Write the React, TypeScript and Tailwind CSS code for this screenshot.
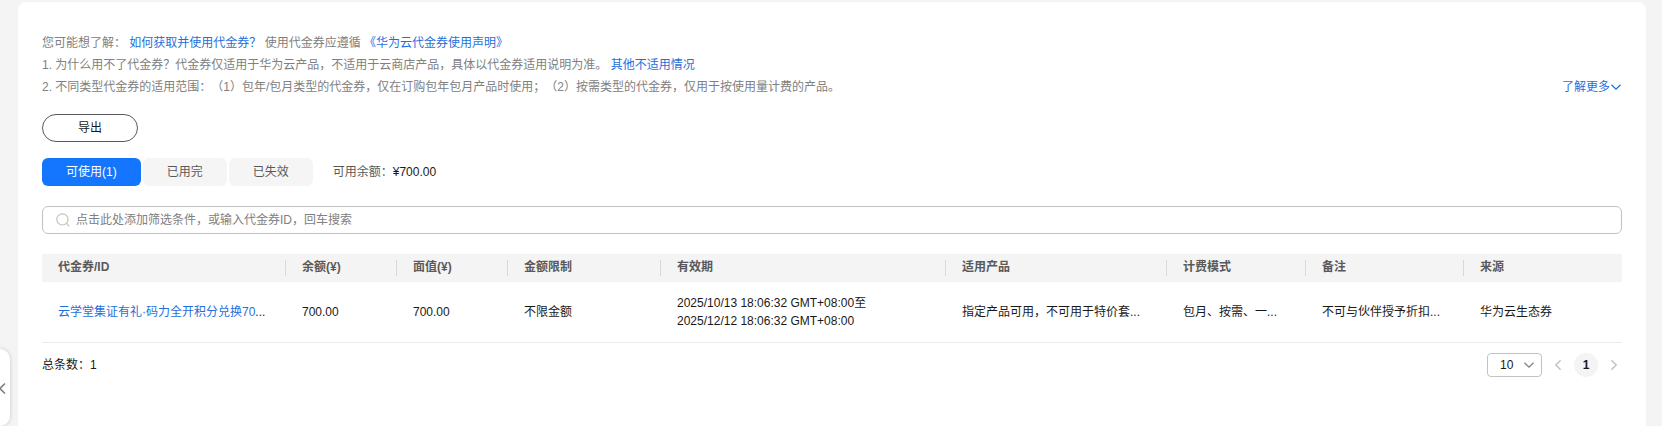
import { useState } from "react";

type Tab = { key: string; label: string };

const tabs: Tab[] = [
  { key: "usable", label: "可使用(1)" },
  { key: "used", label: "已用完" },
  { key: "expired", label: "已失效" },
];

const columns = [
  { title: "代金券/ID", width: "w-[244px]" },
  { title: "余额(¥)", width: "w-[111px]" },
  { title: "面值(¥)", width: "w-[111px]" },
  { title: "金额限制", width: "w-[153px]" },
  { title: "有效期", width: "w-[285px]" },
  { title: "适用产品", width: "w-[221px]" },
  { title: "计费模式", width: "w-[139px]" },
  { title: "备注", width: "w-[158px]" },
  { title: "来源", width: "w-[158px]" },
];

type IconProps = { className?: string };

function ChevronDown({ className }: IconProps) {
  return (
    <svg viewBox="0 0 12 12" fill="none" stroke="currentColor" className={className} aria-hidden="true">
      <path d="M1.5 3.8 6 8.2l4.5-4.4" strokeWidth="1.3" />
    </svg>
  );
}

function ChevronLeft({ className }: IconProps) {
  return (
    <svg viewBox="0 0 12 12" fill="none" stroke="currentColor" className={className} aria-hidden="true">
      <path d="M8.6 1.3 3.8 6l4.8 4.7" strokeWidth="1.5" />
    </svg>
  );
}

function ChevronRight({ className }: IconProps) {
  return (
    <svg viewBox="0 0 12 12" fill="none" stroke="currentColor" className={className} aria-hidden="true">
      <path d="M3.4 1.3 8.2 6l-4.8 4.7" strokeWidth="1.5" />
    </svg>
  );
}

function SearchIcon({ className }: IconProps) {
  return (
    <svg viewBox="0 0 14 14" fill="none" stroke="currentColor" strokeWidth="1.2" className={className} aria-hidden="true">
      <circle cx="6.4" cy="6.4" r="5.6" />
      <path d="m10.4 10.4 3 3" />
    </svg>
  );
}

function Notice() {
  return (
    <section className="flex items-end justify-between leading-[22px] text-[#808080]">
      <div>
        <p>
          您可能想了解： <a href="#get" className="text-[#1f6fdc]">如何获取并使用代金券？</a> 使用代金券应遵循{" "}
          <a href="#terms" className="text-[#1f6fdc]">《华为云代金券使用声明》</a>
        </p>
        <p>
          1. 为什么用不了代金券？代金券仅适用于华为云产品，不适用于云商店产品，具体以代金券适用说明为准。{" "}
          <a href="#others" className="text-[#1f6fdc]">其他不适用情况</a>
        </p>
        <p>2. 不同类型代金券的适用范围：（1）包年/包月类型的代金券，仅在订购包年包月产品时使用；（2）按需类型的代金券，仅用于按使用量计费的产品。</p>
      </div>
      <a href="#more" className="flex shrink-0 items-center text-[#1f6fdc]">
        了解更多
        <ChevronDown className="size-3" />
      </a>
    </section>
  );
}

function VoucherTable() {
  return (
    <table className="mt-5 w-full table-fixed border-separate border-spacing-0 text-left">
      <colgroup>
        {columns.map((c) => (
          <col key={c.title} className={c.width} />
        ))}
      </colgroup>
      <thead>
        <tr className="h-7 bg-[#f4f4f4] text-[#595959]">
          {columns.map((c, i) => (
            <th key={c.title} scope="col" className="p-0 font-bold">
              <div className={i < columns.length - 1 ? "h-4 border-r border-[#d9d9d9] pl-4 leading-[14px]" : "h-4 pl-4 leading-[14px]"}>
                {c.title}
              </div>
            </th>
          ))}
        </tr>
      </thead>
      <tbody>
        <tr className="h-[61px] leading-[18px] whitespace-nowrap *:border-b *:border-[#ebebeb] *:px-4 *:py-0">
          <td>
            <a href="#voucher" className="text-[#1f6fdc]">云学堂集证有礼·码力全开积分兑换70</a>...
          </td>
          <td>700.00</td>
          <td>700.00</td>
          <td>不限金额</td>
          <td>
            2025/10/13 18:06:32 GMT+08:00至
            <br />
            2025/12/12 18:06:32 GMT+08:00
          </td>
          <td>指定产品可用，不可用于特价套...</td>
          <td>包月、按需、一...</td>
          <td>不可与伙伴授予折扣...</td>
          <td>华为云生态券</td>
        </tr>
      </tbody>
    </table>
  );
}

function Pager() {
  return (
    <footer className="mt-2.5 flex items-center justify-between">
      <span>总条数：1</span>
      <nav aria-label="分页" className="flex items-center">
        <div className="relative">
          <select
            aria-label="每页条数"
            defaultValue="10"
            className="h-6 w-[55px] appearance-none rounded-sm border border-[#c2c2c2] bg-white pl-3 text-xs text-[#191919]"
          >
            <option value="10">10</option>
            <option value="20">20</option>
            <option value="50">50</option>
          </select>
          <ChevronDown className="pointer-events-none absolute top-1.5 right-[7px] size-3 text-[#808080]" />
        </div>
        <button type="button" aria-label="上一页" className="ml-2.5 text-[#c2c2c2]">
          <ChevronLeft className="size-3" />
        </button>
        <button type="button" aria-current="page" className="ml-2.5 size-6 rounded-full bg-[#f4f4f4] font-bold">
          1
        </button>
        <button type="button" aria-label="下一页" className="mr-0.5 ml-2.5 text-[#c2c2c2]">
          <ChevronRight className="size-3" />
        </button>
      </nav>
    </footer>
  );
}

export default function App() {
  const [active, setActive] = useState("usable");

  return (
    <div
      lang="zh-CN"
      className="relative flex min-h-screen flex-col bg-[#f4f4f4] pt-0.5 pr-4 pl-[18px] font-['Liberation_Sans','Noto_Sans_CJK_SC',sans-serif] text-xs text-[#191919] [text-spacing-trim:space-all]"
    >
      <main className="grow rounded-t-lg bg-white px-6 pt-[30px]">
        <Notice />

        <button type="button" className="mt-4 flex h-7 w-24 items-center justify-center rounded-full border border-[#595959]">
          导出
        </button>

        <div className="mt-4 flex items-center">
          <div role="tablist" className="flex gap-0.5">
            {tabs.map((t) => (
              <button
                key={t.key}
                type="button"
                role="tab"
                aria-selected={active === t.key}
                onClick={() => setActive(t.key)}
                className={
                  active === t.key
                    ? "h-7 rounded-md bg-[#1476ff] px-6 text-white"
                    : "h-7 rounded-md bg-[#f5f5f5] px-6 text-[#595959]"
                }
              >
                {t.label}
              </button>
            ))}
          </div>
          <p className="ml-5 text-[#595959]">
            可用余额：<span className="text-[#191919]">¥700.00</span>
          </p>
        </div>

        <label className="mt-5 flex h-7 items-center gap-1.5 rounded-md border border-[#c2c2c2] px-[13px]">
          <SearchIcon className="size-3.5 shrink-0 text-[#c2c2c2]" />
          <input
            type="text"
            aria-label="筛选代金券"
            placeholder="点击此处添加筛选条件，或输入代金券ID，回车搜索"
            className="min-w-0 grow bg-transparent outline-none placeholder:text-[#808080]"
          />
        </label>

        <VoucherTable />
        <Pager />
      </main>

      <button
        type="button"
        aria-label="展开侧栏"
        className="absolute top-[349px] left-0 flex h-[77px] w-2.5 items-center rounded-r-xl bg-white text-[#808080] shadow-[0_0_4px_rgba(0,0,0,0.18)]"
      >
        <svg viewBox="0 0 6 12" fill="none" stroke="currentColor" className="h-3 w-1.5" aria-hidden="true">
          <path d="M5 1.5 0 6.5l5 5" strokeWidth="1.6" />
        </svg>
      </button>
    </div>
  );
}
